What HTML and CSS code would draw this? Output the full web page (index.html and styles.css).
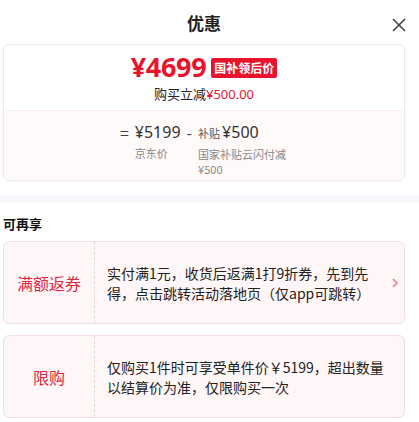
FILE: index.html
```html
<!DOCTYPE html>
<html lang="zh-CN">
<head>
    <meta charset="UTF-8">
    <meta name="viewport" content="width=device-width, initial-scale=1.0">
    <title>优惠</title>
    <link rel="stylesheet" href="styles.css">
</head>
<body>
    <div class="panel">
        <div class="header">
            <h1>优惠</h1>
            <span class="close">
                <svg width="16" height="16" viewBox="0 0 16 16"><path d="M2 2 L14 14 M14 2 L2 14" stroke="#444" stroke-width="1.6" fill="none"/></svg>
            </span>
        </div>

        <div class="price-card">
            <div class="price-top">
                <div class="price-line">
                    <span class="price">¥4699</span>
                    <span class="badge">国补领后价</span>
                </div>
                <div class="save">购买立减<span class="red">¥500.00</span></div>
            </div>
            <div class="price-bottom">
                <div class="formula">
                    <span class="eq">=</span>
                    <div class="term">
                        <span class="num">¥5199</span>
                        <span class="cap">京东价</span>
                    </div>
                    <span class="minus">-</span>
                    <div class="term">
                        <span class="num"><small>补贴</small>¥500</span>
                        <span class="cap wrap">国家补贴云闪付减¥500</span>
                    </div>
                </div>
            </div>
        </div>
    </div>

    <div class="band"></div>

    <div class="panel">
        <h2>可再享</h2>

        <div class="promo">
            <div class="promo-name">满额返券</div>
            <div class="promo-text">实付满1元，收货后返满1打9折券，先到先得，点击跳转活动落地页（仅app可跳转）</div>
            <span class="arrow">
                <svg width="8" height="12" viewBox="0 0 8 12"><path d="M2 2 L6 6 L2 10" stroke="#ec7c8c" stroke-width="1.6" fill="none"/></svg>
            </span>
        </div>

        <div class="promo">
            <div class="promo-name">限购</div>
            <div class="promo-text">仅购买1件时可享受单件价￥5199，超出数量以结算价为准，仅限购买一次</div>
        </div>
    </div>
</body>
</html>
```

FILE: styles.css
```css
body {
    margin: 0;
    background: #ffffff;
    font-family: "Noto Sans CJK SC", "Noto Sans", sans-serif;
    color: #333333;
}
.panel {
    width: 402px;
    margin-left: 3px;
}
.header {
    position: relative;
    height: 44px;
    display: flex;
    align-items: center;
    justify-content: center;
}
h1 {
    margin: 0;
    font-size: 17px;
    font-weight: bold;
    color: #222222;
}
.close {
    position: absolute;
    right: -2px;
    top: 14px;
}
.price-card {
    border: 1px solid #f0e7e9;
    border-radius: 5px;
    overflow: hidden;
}
.price-top {
    height: 64px;
    display: flex;
    flex-direction: column;
    align-items: center;
    padding-top: 1px;
}
.price-line {
    display: flex;
    align-items: center;
    gap: 5px;
    height: 40px;
}
.price {
    font-family: "Open Sans", "Noto Sans", sans-serif;
    font-weight: bold;
    font-size: 27px;
    color: #e8142d;
    letter-spacing: -0.3px;
}
.badge {
    background: #e8142d;
    color: #ffffff;
    font-size: 12px;
    font-weight: bold;
    padding: 0 3px;
    height: 20px;
    line-height: 20px;
    border-radius: 2px;
    margin-top: 3px;
}
.save {
    font-size: 13px;
    line-height: 16px;
    color: #222222;
}
.red {
    color: #e8142d;
    font-family: "Noto Sans", sans-serif;
}
.price-bottom {
    background: #fffafa;
    border-top: 1px solid #fbeff0;
    height: 69px;
    display: flex;
    justify-content: center;
}
.formula {
    display: flex;
    align-items: flex-start;
    gap: 6px;
    padding-top: 9px;
}
.eq, .minus {
    font-size: 16px;
    line-height: 24px;
    color: #444444;
}
.term {
    display: flex;
    flex-direction: column;
}
.num {
    font-family: "Noto Sans", sans-serif;
    font-size: 16px;
    line-height: 24px;
    color: #333333;
}
.num small {
    font-family: "Noto Sans CJK SC", sans-serif;
    font-size: 11px;
    color: #555555;
    margin-right: 2px;
}
.cap {
    font-size: 11px;
    line-height: 15px;
    color: #888888;
    margin-top: 2px;
}
.cap.wrap {
    width: 90px;
}
.band {
    height: 9px;
    margin-top: 13px;
    background: #f7f8fc;
}
h2 {
    margin: 12px 0 8px;
    font-size: 13px;
    font-weight: bold;
    color: #111111;
    line-height: 18px;
}
.promo {
    height: 81px;
    border: 1px solid #f3dfe3;
    border-radius: 6px;
    background: #fff6f7;
    display: flex;
    align-items: center;
    margin-bottom: 11px;
}
.promo-name {
    width: 90px;
    flex-shrink: 0;
    align-self: stretch;
    border-right: 1px dashed #eed3d8;
    display: flex;
    align-items: center;
    justify-content: center;
    font-size: 16px;
    color: #d9283f;
}
.promo-text {
    width: 279px;
    flex-shrink: 0;
    padding-left: 12px;
    font-size: 14px;
    line-height: 20px;
    color: #222222;
}
.arrow {
    width: 14px;
    flex-shrink: 0;
    display: flex;
    justify-content: center;
    margin-left: 2px;
}
```
